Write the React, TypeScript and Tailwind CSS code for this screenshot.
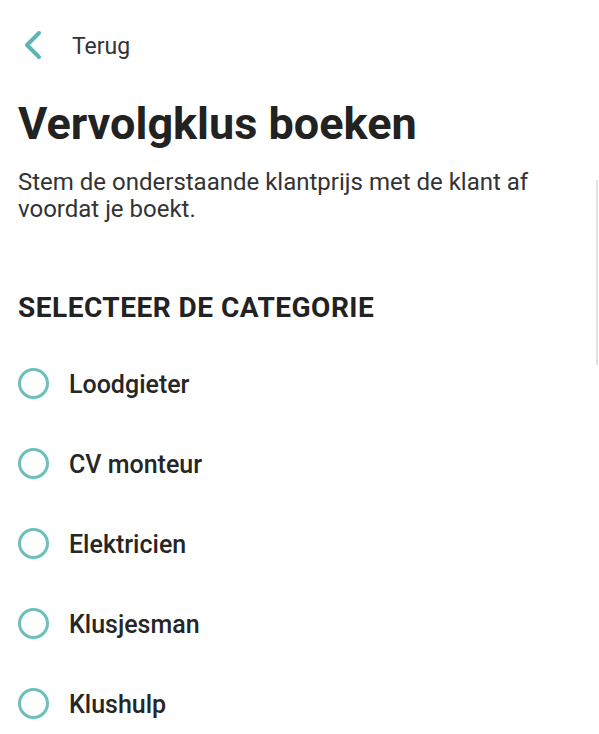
import React from 'react';

const categories = ['Loodgieter', 'CV monteur', 'Elektricien', 'Klusjesman', 'Klushulp'];

const BackIcon = () => (
  <svg width="22" height="30" viewBox="0 0 22 30" fill="none">
    <path d="M18 3 L6 15 L18 27" stroke="#5bb5b0" strokeWidth="4" strokeLinecap="round" strokeLinejoin="round" />
  </svg>
);

const RadioItem = ({ label }: { label: string }) => {
  return (
    <label className="flex items-center h-[80px] gap-[20px] cursor-pointer">
      <span className="w-[31px] h-[31px] rounded-full border-[3px] border-[#6cc0bb] shrink-0 -mt-[3px]" />
      <span className="text-[25px] font-medium text-[#262626]">{label}</span>
    </label>
  );
};

const App = () => {
  return (
    <div className="relative min-h-screen bg-white px-[18px] font-['Roboto',sans-serif] text-[#222]">
      <div className="flex items-center h-[90px] gap-[29px] pl-[3px]">
        <BackIcon />
        <span className="text-[23px] text-[#333] mt-[4px]">Terug</span>
      </div>
      <h1 className="text-[45px] font-bold leading-[52px] mt-[8px] text-[#222]">Vervolgklus boeken</h1>
      <p className="text-[24px] leading-[27px] text-[#333] mt-[19px] pr-[20px]">
        Stem de onderstaande klantprijs met de klant af voordat je boekt.
      </p>
      <h2 className="text-[28px] font-bold uppercase tracking-[0.5px] mt-[69px] leading-[32px]">
        Selecteer de categorie
      </h2>
      <div className="flex flex-col mt-[21px]">
        {categories.map((c) => (
          <RadioItem key={c} label={c} />
        ))}
      </div>
      <div className="absolute right-[1px] top-[180px] h-[185px] w-[2px] bg-[#e2e2e2]" />
    </div>
  );
};

export default App;
